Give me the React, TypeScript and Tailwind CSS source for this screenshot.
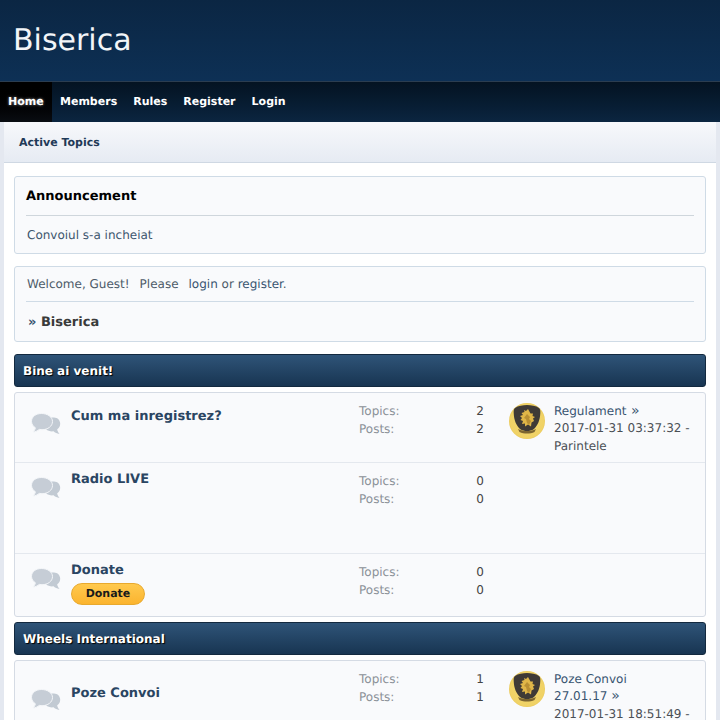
const Bubbles = () => (
  <svg width="30" height="22" viewBox="0 0 30 22" className="block">
    <path d="M17 4.500h6c3.600 0 6.200 2.900 6.200 6.300 0 2.400-1.200 4.300-3 5.500.2 1.500.9 3 2.300 4.700-2.400-.3-4.600-1.300-6-2.700-2.600.4-5.500-.3-7.500-2z" fill="#c2cad3" />
    <path d="M10.500.5C4.900.5.500 3.800.5 8.300c0 2.700 1.500 5 3.900 6.500-.2 1.300-1 2.900-2.400 4.200 2.500-.2 4.700-1.200 6.300-2.600 .9.200 1.800.3 2.700.3 5.800 0 10.500-3.500 10.500-8.200S16.300.5 10.500.5z" fill="#c6cdd6" stroke="#f4f6f9" strokeWidth="1" />
  </svg>
);

const Avatar = () => (
  <svg width="36" height="36" viewBox="0 0 36 36" className="block">
    <defs>
      <radialGradient id="av" cx="50%" cy="50%" r="55%">
        <stop offset="0%" stopColor="#f3d873" />
        <stop offset="85%" stopColor="#f0d265" />
        <stop offset="100%" stopColor="#e2bc4c" />
      </radialGradient>
    </defs>
    <circle cx="18" cy="18" r="18" fill="url(#av)" />
    <path d="M6 5c3-2.200 8-3 12-3s9 .8 12 3c1.400 1 1.400 3 1.300 5-.3 7-2.300 12-6.300 16-2 1.500-4.500 2-7 2s-5-.5-7-2C7 22 5 17 4.700 10 4.600 8 4.600 6 6 5z" fill="#3f3a36" />
    <path d="M19 6l-2 2-2-1 .5 2-3 1 1.500 2-3 1 2 2-1.500 2 2.500 1-1 3 3-.5v3l3-2 3 2 .5-4 2.500-1.500-1-2.500 2-1.500-2.500-1 .5-2.500-2.500 0z" fill="#e0b648" />
    <path d="M18 11l3 3-1 2 2 2-2 4-2-2-1-4-2-1z" fill="#b98f33" />
    <path d="M9 26c3 1.500 6 2 9 2s6-.5 9-2l-1.500 3c-2 1-5 1.500-7.500 1.500s-5.500-.5-7.500-1.500z" fill="#7c6530" />
  </svg>
);

const ForumRow = ({ title, topics, posts, last, extra, tall, iconTop, titleTop, border }: {
  title: string; topics: number; posts: number; last?: React.ReactNode; extra?: React.ReactNode;
  tall: string; iconTop: string; titleTop: string; border?: boolean;
}) => (
  <div className={`flex ${tall} ${border ? "border-t border-[#e4e8ee]" : ""}`}>
    <div className={`w-[56px] pl-[16px] shrink-0 ${iconTop}`}><Bubbles /></div>
    <div className={`w-[288px] shrink-0 ${titleTop}`}>
      <div className="text-[13px] font-bold leading-[18px] text-[#2a4562]">{title}</div>
      {extra}
    </div>
    <div className="w-[150px] shrink-0 pt-[10px] text-[12px] leading-[17.5px] text-[#8b9198]">
      <div className="flex justify-between pr-[25px]"><span>Topics:</span><span className="text-[#444]">{topics}</span></div>
      <div className="flex justify-between pr-[25px]"><span>Posts:</span><span className="text-[#444]">{posts}</span></div>
    </div>
    {last}
  </div>
);

const LastPost = ({ link, more, date, author }: { link: string; more?: string; date: string; author?: string }) => (
  <div className="flex gap-[9px] pt-[10px]">
    <Avatar />
    <div className="w-[145px] whitespace-nowrap text-[12px] leading-[17.3px] text-[#4a4f55]">
      <div className="text-[#385470]">{link}{!more && <span className="text-[14px]"> »</span>}</div>
      {more && <div className="text-[#385470]">{more} <span className="text-[14px]">»</span></div>}
      <div>{date}</div>
      {author && <div>{author}</div>}
    </div>
  </div>
);

const CatBar = ({ label }: { label: string }) => (
  <div className="h-[33px] rounded-[3px] border border-[#13293f] bg-gradient-to-b from-[#2f5478] to-[#183552] pl-[8px] text-[12px] font-bold leading-[33px] text-white [text-shadow:1px_1px_1px_#000]">
    {label}
  </div>
);

const App = () => {
  return (
    <div className="h-[720px] w-[720px] overflow-hidden bg-[#e4e8f0] font-['DejaVu_Sans',sans-serif] text-[12px] [text-rendering:geometricPrecision]">
      <div className="h-[82px] border-b border-[#2b3d50] bg-gradient-to-b from-[#0b2643] to-[#0d3055] pl-[13px] pt-[22px] text-[30px] leading-[38px] text-[#f2f5f8]">
        Biserica
      </div>
      <div className="flex h-[40px] bg-gradient-to-b from-[#041322] to-[#0b2540] text-[11px] font-bold leading-[40px] text-white">
        <div className="w-[52px] bg-gradient-to-b from-black to-[#0a0d12] pl-[8px] [text-shadow:0_0_3px_#fff8]">Home</div>
        <div className="ml-[8px] flex gap-[16px]">
          <span>Members</span><span>Rules</span><span>Register</span><span>Login</span>
        </div>
      </div>
      <div className="mx-[4px] h-[598px] bg-white">
        <div className="h-[41px] border-b border-[#cfd8e3] bg-gradient-to-b from-[#f7f8fb] to-[#e6ebf3] pl-[15px] text-[11px] font-bold leading-[41px] text-[#1f3a57]">
          Active Topics
        </div>
        <div className="flex flex-col px-[10px] pt-[13px]">
          <div className="h-[78px] rounded-[3px] border border-[#cfdbe6] bg-[#f9fafc] px-[11px]">
            <div className="h-[39px] border-b border-[#cfd6dc] text-[13px] font-bold leading-[39px] text-black">Announcement</div>
            <div className="pl-[1px] pt-[11px] leading-[16px] text-[#3d566e]">Convoiul s-a incheiat</div>
          </div>
          <div className="mt-[12px] h-[76px] rounded-[3px] border border-[#cfdbe6] bg-[#f9fafc] px-[11px]">
            <div className="h-[35px] border-b border-[#cfdbe6] pl-[1px] pt-[9px] leading-[17px] text-[#4d5b69]">
              <span>Welcome, Guest!</span>
              <span className="ml-[10px]">Please</span>
              <span className="ml-[10px] text-[#385470]">login</span> or <span className="text-[#385470]">register</span>.
            </div>
            <div className="pl-[2px] pt-[12px] text-[13px] font-bold leading-[17px] text-[#3a3a3a]"><span className="text-[#385470]">»</span> Biserica</div>
          </div>
          <div className="mt-[12px]"><CatBar label="Bine ai venit!" /></div>
          <div className="mt-[5px] h-[225px] rounded-[3px] border border-[#d5dbe4] bg-[#f9fafc]">
            <ForumRow title="Cum ma inregistrez?" topics={2} posts={2} tall="h-[69px]" iconTop="pt-[20px]" titleTop="pt-[15px]"
              last={<LastPost link="Regulament" date="2017-01-31 03:37:32 -" author="Parintele" />} />
            <ForumRow title="Radio LIVE" topics={0} posts={0} border tall="h-[91px]" iconTop="pt-[14px]" titleTop="pt-[8px]" />
            <ForumRow title="Donate" topics={0} posts={0} border tall="h-[63px]" iconTop="pt-[14px]" titleTop="pt-[8px]"
              extra={<div className="mt-[3px] h-[22px] w-[74px] rounded-full border border-[#e8a92e] bg-gradient-to-b from-[#ffc94d] to-[#fbb42e] text-center text-[11px] font-bold leading-[20px] text-[#1a1a1a]">Donate</div>} />
          </div>
          <div className="mt-[5px]"><CatBar label="Wheels International" /></div>
          <div className="mt-[5px] h-[80px] rounded-[3px] border border-[#d5dbe4] bg-[#f9fafc]">
            <ForumRow title="Poze Convoi" topics={1} posts={1} tall="h-[78px]" iconTop="pt-[28px]" titleTop="pt-[24px]"
              last={<LastPost link="Poze Convoi" more="27.01.17" date="2017-01-31 18:51:49 -" />} />
          </div>
        </div>
      </div>
    </div>
  );
};

export default App;
